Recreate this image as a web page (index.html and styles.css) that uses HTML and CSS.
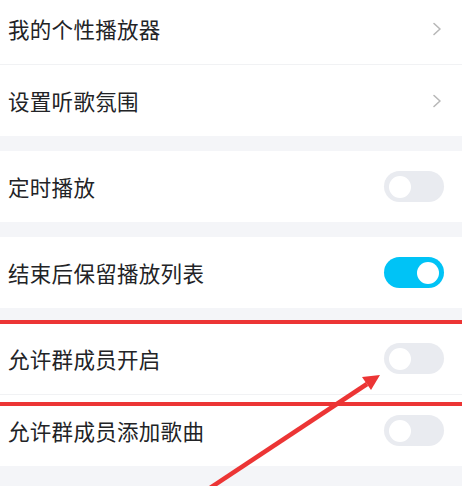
FILE: index.html
```html
<!DOCTYPE html>
<html lang="zh-CN">
<head>
<meta charset="utf-8">
<title>设置</title>
<link rel="stylesheet" href="styles.css">
</head>
<body>
<div class="page">
  <div class="list">
    <div class="group">
      <div class="row first">
        <span class="label">我的个性播放器</span>
        <svg class="chev" width="10" height="14" viewBox="0 0 10 14"><polyline points="2,1.5 8,7 2,12.5" fill="none" stroke="#b8b8b8" stroke-width="1.6" stroke-linecap="round" stroke-linejoin="round"/></svg>
      </div>
      <div class="divider"></div>
      <div class="row">
        <span class="label">设置听歌氛围</span>
        <svg class="chev" width="10" height="14" viewBox="0 0 10 14"><polyline points="2,1.5 8,7 2,12.5" fill="none" stroke="#b8b8b8" stroke-width="1.6" stroke-linecap="round" stroke-linejoin="round"/></svg>
      </div>
    </div>
    <div class="group">
      <div class="row">
        <span class="label">定时播放</span>
        <span class="toggle"><span class="knob"></span></span>
      </div>
    </div>
    <div class="group">
      <div class="row">
        <span class="label">结束后保留播放列表</span>
        <span class="toggle on"><span class="knob"></span></span>
      </div>
    </div>
    <div class="group">
      <div class="row">
        <span class="label">允许群成员开启</span>
        <span class="toggle"><span class="knob"></span></span>
      </div>
      <div class="divider"></div>
      <div class="row">
        <span class="label">允许群成员添加歌曲</span>
        <span class="toggle"><span class="knob"></span></span>
      </div>
    </div>
  </div>
  <div class="mark mark-a"></div>
  <div class="mark mark-b"></div>
  <svg class="arrow" width="462" height="486" viewBox="0 0 462 486">
    <line x1="210" y1="488" x2="367" y2="384" stroke="#ec3535" stroke-width="4.5"/>
    <polygon points="380,375 371,390 362,377" fill="#ec3535"/>
  </svg>
</div>
</body>
</html>
```
FILE: styles.css
```css
html, body {
  margin: 0;
  padding: 0;
  background: #f4f5f8;
}
body {
  font-family: "Noto Sans CJK SC", "Noto Sans", sans-serif;
  color: #222326;
}
.page {
  position: relative;
  width: 462px;
  height: 486px;
  overflow: hidden;
  background: #f4f5f8;
}
.list {
  display: flex;
  flex-direction: column;
  gap: 15px;
  margin-top: -7px;
}
.group {
  background: #ffffff;
  display: flex;
  flex-direction: column;
}
.row {
  height: 71px;
  display: flex;
  align-items: center;
  justify-content: space-between;
  padding: 0 18px 0 8px;
}
.label {
  font-size: 21.5px;
  letter-spacing: 0.3px;
  line-height: 1;
}
.divider {
  height: 1px;
  background: #f1f2f4;
}
.chev {
  margin-right: 2px;
}
.toggle {
  width: 60px;
  height: 31px;
  border-radius: 16px;
  background: #e9ebf0;
  display: flex;
  align-items: center;
  padding: 0 5px;
  box-sizing: border-box;
}
.knob {
  width: 22px;
  height: 22px;
  border-radius: 50%;
  background: #ffffff;
}
.toggle.on {
  background: #00c3f6;
  justify-content: flex-end;
}
.mark {
  position: absolute;
  left: 0;
  width: 462px;
  height: 4px;
  background: #ec3535;
}
.mark-a { top: 320px; }
.mark-b { top: 402px; }
.arrow {
  position: absolute;
  left: 0;
  top: 0;
}
```
